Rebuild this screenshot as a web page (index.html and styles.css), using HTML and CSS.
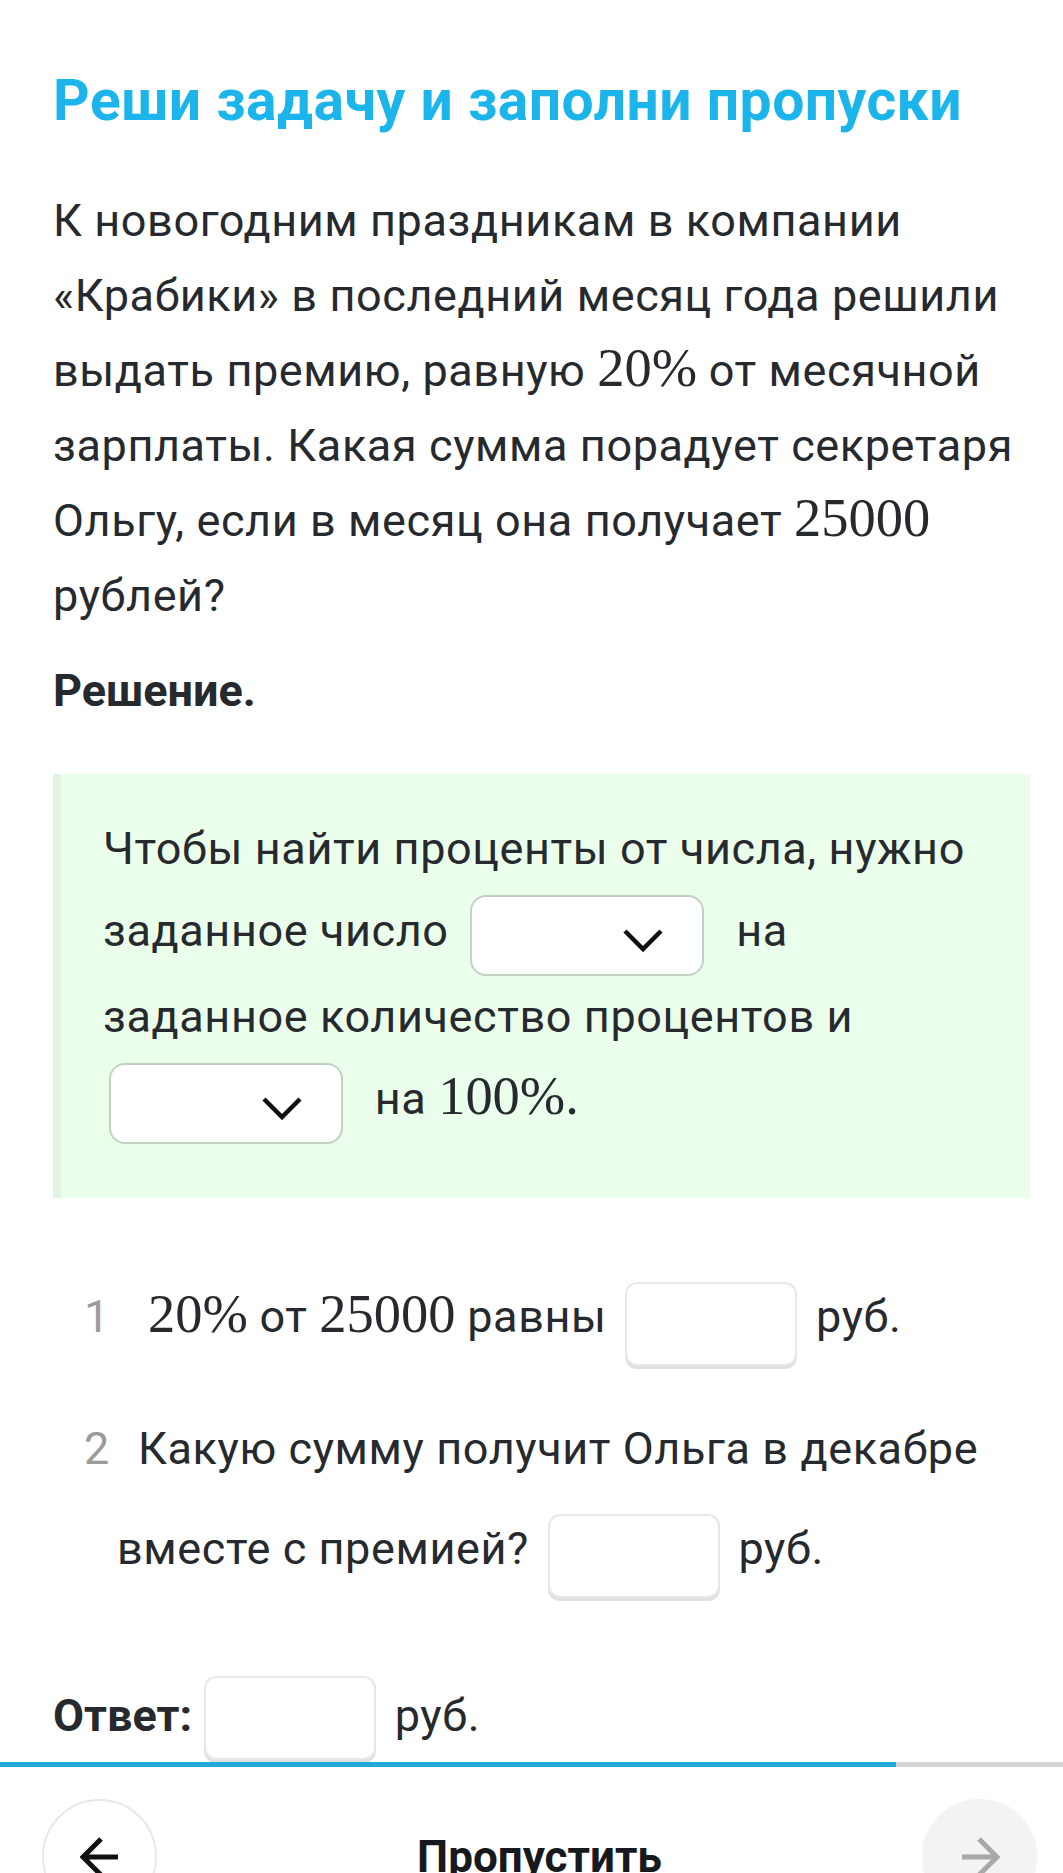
FILE: index.html
```html
<!DOCTYPE html>
<html lang="ru">
<head>
    <meta charset="UTF-8">
    <title>Реши задачу и заполни пропуски</title>
    <link rel="stylesheet" href="styles.css">
</head>
<body>

    <main class="page">
        <h1 class="title">Реши задачу и заполни пропуски</h1>

        <p class="task">
            К новогодним праздникам в компании «Крабики» в последний месяц года решили
            выдать премию, равную <span class="math">20%</span> от месячной зарплаты.
            Какая сумма порадует секретаря Ольгу, если в месяц она получает
            <span class="math">25000</span> рублей?
        </p>

        <h2 class="solution">Решение.</h2>

        <div class="hint">
            Чтобы найти проценты от числа, нужно заданное число
            <span class="select"><svg width="40" height="24" viewBox="0 0 40 24"><path d="M2 2L20 20L38 2" fill="none" stroke="#111" stroke-width="4.5"/></svg></span>
            на заданное количество процентов и
            <span class="select first"><svg width="40" height="24" viewBox="0 0 40 24"><path d="M2 2L20 20L38 2" fill="none" stroke="#111" stroke-width="4.5"/></svg></span>
            на <span class="math">100%.</span>
        </div>

        <ol class="steps">
            <li><span class="num">1</span><span class="math lead">20%</span> от <span class="math">25000</span> равны <span class="field"></span> руб.</li>
            <li><span class="num">2</span>Какую сумму получит Ольга в декабре вместе с премией? <span class="field"></span> руб.</li>
        </ol>

        <div class="answer">
            <b>Ответ:</b> <span class="field"></span> руб.
        </div>
    </main>

    <footer class="nav">
        <div class="progress"><div class="progress-fill" style="width: 84.3%"></div></div>
        <div class="nav-row">
            <div class="circle">
                <svg width="40" height="40" viewBox="0 0 40 40"><path d="M38 20H4M21 2L3 20L21 38" fill="none" stroke="#111" stroke-width="5"/></svg>
            </div>
            <div class="skip">Пропустить</div>
            <div class="circle next">
                <svg width="40" height="40" viewBox="0 0 40 40"><path d="M2 20H36M19 2L37 20L19 38" fill="none" stroke="#a8a8a8" stroke-width="5"/></svg>
            </div>
        </div>
    </footer>

</body>
</html>
```

FILE: styles.css
```css
body {
    margin: 0;
    font-family: Roboto, "Noto Sans", sans-serif;
    color: #26292d;
    background-color: #fff;
}

.page {
    padding: 70px 20px 140px 53px;
}

.title {
    margin: 0;
    font-size: 57px;
    line-height: 62px;
    letter-spacing: 0.5px;
    font-weight: 700;
    color: #1bb5ec;
}

.task {
    margin: 51px 0 0 0;
    font-size: 45px;
    line-height: 75px;
    letter-spacing: 0.6px;
}

.math {
    font-family: "Liberation Serif", serif;
    font-size: 1.21em;
    line-height: 1;
    letter-spacing: 0;
}

.solution {
    margin: 20px 0 0 0;
    font-size: 45px;
    line-height: 75px;
    font-weight: 700;
}

.hint {
    margin: 46px 13px 0 0;
    padding: 34px 50px 54px 42px;
    background-color: #ebfdeb;
    border-left: 8px solid #e1f4e1;
    font-size: 45px;
    line-height: 82px;
    letter-spacing: 0.6px;
}

.select {
    display: inline-block;
    box-sizing: border-box;
    width: 234px;
    height: 81px;
    margin: 0 20px 0 10px;
    border: 2px solid #c3d1c4;
    border-radius: 16px;
    background-color: #fff;
    vertical-align: -30px;
    overflow: hidden;
}

.select.first {
    margin-left: 6px;
}

.select svg {
    display: block;
    margin: 32px 39px 0 auto;
}

.steps {
    list-style: none;
    margin: 69px 0 0 0;
    padding: 0 0 0 64px;
    font-size: 45px;
    line-height: 100px;
    letter-spacing: 0.6px;
}

.steps li + li {
    margin-top: 32px;
}

.num {
    display: inline-block;
    width: 20px;
    margin-left: -33px;
    margin-right: 34px;
    text-align: right;
    color: #9b9b9b;
}

.lead {
    margin-left: 10px;
}

.field {
    display: inline-block;
    box-sizing: border-box;
    width: 172px;
    height: 84px;
    margin: 0 7px;
    border: 2px solid #e7e7e7;
    border-radius: 12px;
    box-shadow: 0 3px 0 #e0e0e0;
    background-color: #fff;
    vertical-align: -34px;
}

.answer {
    margin-top: 67px;
    font-size: 45px;
    line-height: 100px;
    letter-spacing: 0.6px;
}

.answer b {
    letter-spacing: 0;
}

.answer .field {
    margin-left: 0;
    vertical-align: -29px;
}

.nav {
    position: fixed;
    left: 0;
    right: 0;
    bottom: 0;
    height: 111px;
    background-color: #fff;
    overflow: hidden;
}

.progress {
    height: 5px;
    background-color: #d4d4d4;
}

.progress-fill {
    height: 100%;
    background-color: #20a8d8;
}

.nav-row {
    display: flex;
    align-items: center;
    padding: 32px 26px 0 42px;
}

.circle {
    flex: none;
    display: flex;
    align-items: center;
    justify-content: center;
    box-sizing: border-box;
    width: 115px;
    height: 115px;
    border: 2px solid #e8e8e8;
    border-radius: 50%;
    background-color: #fff;
}

.circle.next {
    background-color: #f3f3f3;
    border-color: #f3f3f3;
}

.skip {
    flex: 1;
    text-align: center;
    font-size: 44px;
    font-weight: 700;
    color: #16191d;
}
```
